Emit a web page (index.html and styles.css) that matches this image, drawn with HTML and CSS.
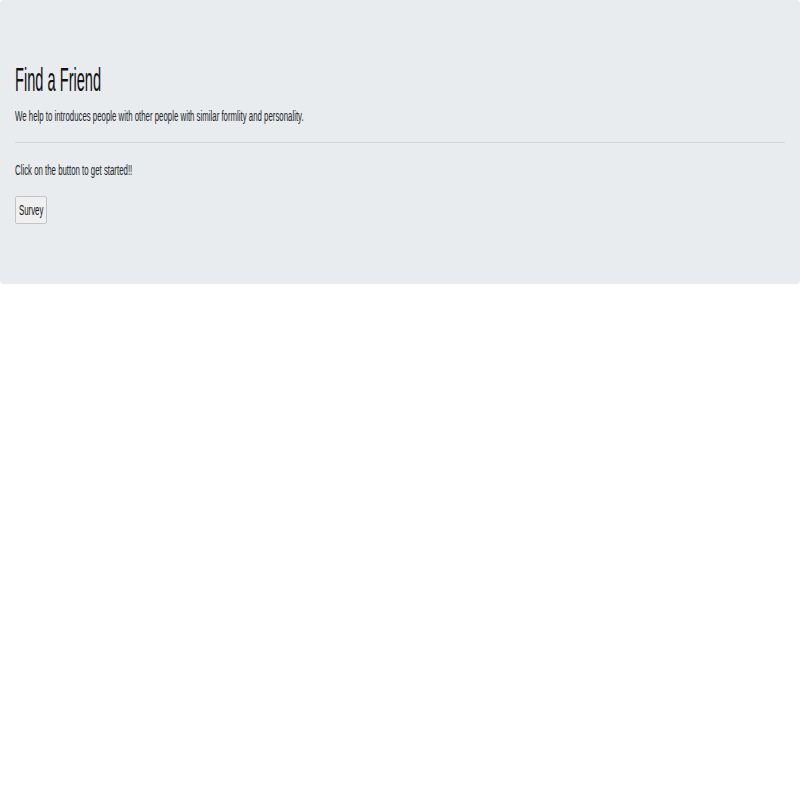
FILE: index.html
```html
<!DOCTYPE html>
<html>
<head>
<meta charset="utf-8">
<link rel="stylesheet" href="styles.css">
</head>
<body>
<div class="jumbotron">
  <h1 class="title"><span class="sq sq-title">Find a Friend</span></h1>
  <p class="lead"><span class="sq">We help to introduces people with other people with similar formlity and personality.</span></p>
  <hr class="rule">
  <p class="note"><span class="sq">Click on the button to get started!!</span></p>
  <button class="survey" type="button"><span class="sq">Survey</span></button>
</div>
</body>
</html>
```
FILE: styles.css
```css
html, body {
  margin: 0;
  padding: 0;
  background: #ffffff;
}
body {
  font-family: "Liberation Sans", Arial, sans-serif;
  color: #212529;
}
.jumbotron {
  background: #e9ecef;
  border-radius: 4px;
  height: 284px;
  box-sizing: border-box;
  padding: 59px 15px 0 15px;
}
.sq {
  display: inline-block;
  white-space: nowrap;
  transform: scaleX(0.56);
  transform-origin: left center;
}
.sq-title {
  transform: scaleX(0.43);
}
.title {
  margin: 0;
  font-size: 34px;
  line-height: 40px;
  font-weight: 400;
  color: #111;
}
.lead {
  margin: 9px 0 0 0;
  font-size: 14px;
  line-height: 16px;
}
.rule {
  margin: 18px 0 0 0;
  border: 0;
  border-top: 1px solid #d2d4d7;
  height: 0;
}
.note {
  margin: 19px 0 0 0;
  font-size: 14px;
  line-height: 16px;
}
.survey {
  display: block;
  margin-top: 18px;
  width: 32px;
  height: 28px;
  padding: 0 0 0 3px;
  text-align: left;
  font-family: "Liberation Sans", Arial, sans-serif;
  font-size: 14px;
  color: #111;
  background: #f0f0f0;
  border: 1px solid #c4c4c4;
  border-radius: 2px;
  overflow: visible;
}
```
